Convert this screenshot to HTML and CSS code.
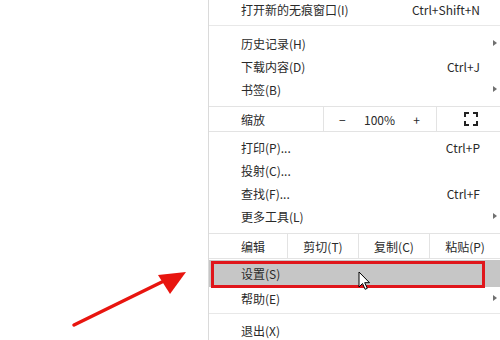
FILE: index.html
```html
<!DOCTYPE html>
<html lang="zh-CN">
<head>
  <meta charset="UTF-8">
  <title>菜单 - 设置</title>
  <link rel="stylesheet" href="styles.css">
</head>
<body>

  <!-- LEFT BLANK AREA + MENU -->
  <div class="page">
    <div class="blank"></div>

    <div class="menu">
      <div class="item">
        <span class="label">打开新的无痕窗口(I)</span>
        <span class="key">Ctrl+Shift+N</span>
      </div>
      <div class="sep"></div>

      <div class="item">
        <span class="label">历史记录(H)</span>
        <span class="sub"></span>
      </div>
      <div class="item">
        <span class="label">下载内容(D)</span>
        <span class="key">Ctrl+J</span>
      </div>
      <div class="item">
        <span class="label">书签(B)</span>
        <span class="sub"></span>
      </div>

      <!-- ZOOM ROW -->
      <div class="row zoom-row">
        <div class="cell cell-label">缩放</div>
        <div class="cell zoom-ctrl">
          <span>−</span>
          <span>100%</span>
          <span>+</span>
        </div>
        <div class="cell zoom-full">
          <svg width="14" height="14" viewBox="0 0 14 14">
            <path d="M1 5V1h4M9 1h4v4M13 9v4H9M5 13H1V9" fill="none" stroke="#222" stroke-width="2"/>
          </svg>
        </div>
      </div>

      <div class="item first">
        <span class="label">打印(P)...</span>
        <span class="key">Ctrl+P</span>
      </div>
      <div class="item">
        <span class="label">投射(C)...</span>
      </div>
      <div class="item">
        <span class="label">查找(F)...</span>
        <span class="key">Ctrl+F</span>
      </div>
      <div class="item">
        <span class="label">更多工具(L)</span>
        <span class="sub"></span>
      </div>

      <!-- EDIT ROW -->
      <div class="row edit-row">
        <div class="cell cell-label">编辑</div>
        <div class="cell edit-cell">剪切(T)</div>
        <div class="cell edit-cell">复制(C)</div>
        <div class="cell edit-cell">粘贴(P)</div>
      </div>

      <div class="item active">
        <span class="label">设置(S)</span>
      </div>
      <div class="item">
        <span class="label">帮助(E)</span>
        <span class="sub"></span>
      </div>
      <div class="sep tight"></div>

      <div class="item">
        <span class="label">退出(X)</span>
      </div>
    </div>
  </div>

  <!-- ANNOTATIONS -->
  <div class="mark-box"></div>

  <svg class="mark-arrow" width="200" height="80" viewBox="0 0 200 80">
    <line x1="74" y1="70" x2="168" y2="24" stroke="#e8150f" stroke-width="3.5" stroke-linecap="round"/>
    <polygon points="186,17 158,20 170,39" fill="#e8150f"/>
  </svg>

  <svg class="cursor" width="13" height="20" viewBox="0 0 13 20">
    <path d="M1 1v15l3.5-3.5 2.6 5.8 2.2-1-2.6-5.6H11.5z" fill="#fff" stroke="#000" stroke-width="1" stroke-linejoin="round"/>
  </svg>

</body>
</html>
```

FILE: styles.css
```css
/* ===== PAGE ===== */
html, body {
  margin: 0;
  padding: 0;
  background: #fff;
  overflow: hidden;
}
body {
  position: relative;
  width: 500px;
  height: 340px;
  font-family: "Noto Sans CJK SC", "Liberation Sans", sans-serif;
  font-size: 12px;
  color: #2a2a2a;
}
.page {
  display: flex;
  height: 340px;
}
.blank {
  width: 208px;
  flex: none;
}

/* ===== MENU ===== */
.menu {
  flex: 1;
  margin-top: -2px;
  border-left: 1px solid #dadada;
  background: #fff;
}
.item {
  height: 23px;
  display: flex;
  align-items: center;
  justify-content: space-between;
  padding: 0 24px 0 32px;
  position: relative;
}
.item.first {
  margin-top: 4px;
}
.item .key {
  color: #2a2a2a;
}
.item .sub {
  position: absolute;
  right: 7px;
  top: 8px;
  width: 0;
  height: 0;
  border-top: 3.5px solid transparent;
  border-bottom: 3.5px solid transparent;
  border-left: 4px solid #707070;
}
.item.active {
  margin-top: 1px;
  height: 27px;
  background: #c6c6c6;
}
.sep {
  height: 1px;
  background: #e8e8e8;
  margin: 4px 0 6px;
}
.sep.tight {
  margin: 3px 0 5px;
}

/* ===== ZOOM / EDIT ROWS ===== */
.row {
  display: flex;
  border-top: 1px solid #e3e3e3;
  border-bottom: 1px solid #e3e3e3;
  margin-top: 5px;
}
.zoom-row {
  height: 24px;
}
.edit-row {
  height: 24px;
}
.cell {
  display: flex;
  align-items: center;
}
.cell-label {
  padding-left: 32px;
}
.zoom-row .cell-label {
  width: 82px;
}
.zoom-ctrl {
  width: 113px;
  border-left: 1px solid #e3e3e3;
  justify-content: space-between;
  padding: 0 16px 0 15px;
  box-sizing: border-box;
}
.zoom-full {
  flex: 1;
  border-left: 1px solid #e3e3e3;
  justify-content: center;
}
.edit-row .cell-label {
  width: 46px;
}
.edit-cell {
  width: 70px;
  border-left: 1px solid #e3e3e3;
  justify-content: center;
}
.edit-cell:last-child {
  flex: 1;
  padding-right: 4px;
}

/* ===== ANNOTATIONS ===== */
.mark-box {
  position: absolute;
  left: 211px;
  top: 261px;
  width: 274px;
  height: 27px;
  box-sizing: border-box;
  border: 3px solid #e0161b;
}
.mark-arrow {
  position: absolute;
  left: 0;
  top: 255px;
}
.cursor {
  position: absolute;
  left: 358px;
  top: 271px;
}
```
